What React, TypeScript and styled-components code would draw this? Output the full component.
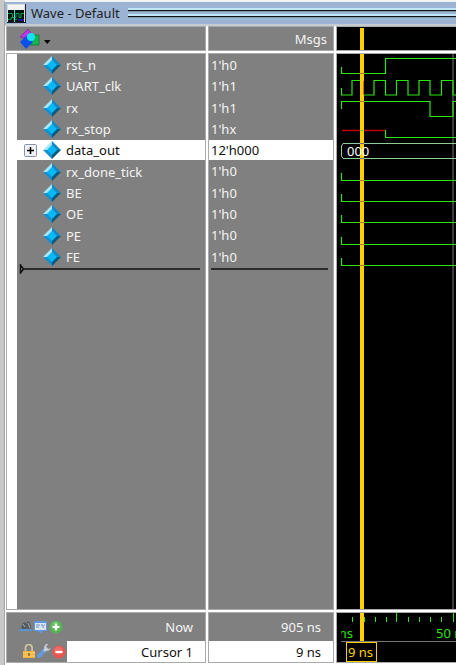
import React from "react";
import styled, { createGlobalStyle } from "styled-components";

const GREY = "#808080";
const GREEN = "#2be610";
const GOLD = "#ffd000";

const GlobalStyle = createGlobalStyle`
  * { box-sizing: border-box; }
  body { margin: 0; background: #c8c8c8; font: 13px/20px "Noto Sans", "Open Sans", sans-serif; }
  button { font: inherit; color: inherit; padding: 0; border: 0; background: none; }
`;

const Window = styled.main`
  min-height: 100vh;
  display: flex;
  flex-direction: column;
  margin-left: 4px;
  border-left: 1px solid #a4a4a4;
  border-top: 2px solid #f4f4f4;
  background: #fff;
  overflow: hidden;
`;

const TitleBar = styled.header`
  height: 22px;
  display: flex;
  align-items: center;
  gap: 5px;
  padding-left: 2px;
  background: #9bb4d3;
`;

const Title = styled.h1`
  margin: 0;
  font-size: 13px;
  font-weight: 400;
  line-height: 20px;
  color: #222;
  white-space: pre;
`;

const Grip = styled.div`
  flex: 1;
  height: 10px;
  margin-left: 3px;
  background: linear-gradient(#c2e4f4 0 2px, #111 2px 3px, #7e98ac 3px 4px, #9bb4d3 4px 6px, #c2e4f4 6px 8px, #111 8px 9px, #7e98ac 9px);
`;

const Panes = styled.div`
  flex: 1;
  display: grid;
  grid-template-columns: 198px 124px minmax(0, 1fr);
  grid-template-rows: 23px minmax(0, 1fr) 49px;
  gap: 4px;
  padding: 1px 0 3px 2px;
  border-top: 2px solid #c6cbd0;
  background: #fff;
`;

const Pane = styled.section<{ $dark?: boolean }>`
  min-width: 0;
  background: ${(p) => (p.$dark ? "#000" : GREY)};
  color: #f4f4f4;
  box-shadow: 0 0 0 1px #aaa;
  overflow: hidden;
`;

const HeaderPane = styled(Pane)`
  display: flex;
  align-items: center;
`;

const ValueHeader = styled(HeaderPane)`
  justify-content: flex-end;
  padding-right: 6px;
`;

const MenuButton = styled.button`
  display: flex;
  margin-left: 12px;
`;

const NamesPane = styled(Pane)`
  border-left: 10px solid #fff;
  padding-top: 1px;
`;

const ValuesPane = styled(Pane)`
  padding-top: 1px;
`;

const SignalList = styled.ul`
  height: 212px;
  margin: 0;
  padding: 0;
  list-style: none;
  display: grid;
  grid-template-rows: repeat(10, 1fr);
  gap: 1px;
`;

const NameRow = styled.li<{ $selected: boolean }>`
  display: grid;
  grid-template-columns: 14px 18px 1fr;
  column-gap: 5px;
  align-items: center;
  padding-left: 7px;
  white-space: nowrap;
  background: ${(p) => (p.$selected ? "#fff" : "transparent")};
  color: ${(p) => (p.$selected ? "#111" : "#f4f4f4")};
`;

const ValueRow = styled.li<{ $selected: boolean }>`
  padding-left: 2px;
  background: ${(p) => (p.$selected ? "#fff" : "transparent")};
  color: ${(p) => (p.$selected ? "#111" : "#f4f4f4")};
`;

const ExpandButton = styled.button`
  width: 14px;
  height: 14px;
  display: flex;
  margin-top: 2px;
`;

const InsertLine = styled.svg`
  display: block;
  width: 100%;
  height: 10px;
  margin-top: -3px;
`;

const Drawing = styled.svg`
  display: block;
  width: 100%;
  height: 100%;
`;

const FooterNames = styled(Pane)`
  display: grid;
  grid-template-rows: 28px 21px;
`;

const FooterRow = styled.div`
  display: flex;
  align-items: center;
`;

const Tools = styled.div`
  width: 60px;
  display: flex;
  padding-left: 11px;
`;

const CursorTools = styled(Tools)`
  padding-left: 14px;
`;

const ToolButton = styled.button`
  width: 15px;
  height: 16px;
  display: flex;
  align-items: center;
  justify-content: center;
`;

const FooterLabel = styled.div<{ $active?: boolean }>`
  flex: 1;
  align-self: stretch;
  display: flex;
  align-items: center;
  justify-content: flex-end;
  padding-right: 12px;
  background: ${(p) => (p.$active ? "#fff" : "transparent")};
  color: ${(p) => (p.$active ? "#111" : "#f4f4f4")};
`;

const signals = [
  { name: "rst_n", value: "1'h0" },
  { name: "UART_clk", value: "1'h1" },
  { name: "rx", value: "1'h1" },
  { name: "rx_stop", value: "1'hx" },
  { name: "data_out", value: "12'h000", bus: true },
  { name: "rx_done_tick", value: "1'h0" },
  { name: "BE", value: "1'h0" },
  { name: "OE", value: "1'h0" },
  { name: "PE", value: "1'h0" },
  { name: "FE", value: "1'h0" },
];

const WaveIcon = () => (
  <svg width="19" height="19" viewBox="0 0 19 19">
    <path d="M0 0h19v19H0z" fill="#222" />
    <path d="M0 0h18v18H0z" fill="#ddd" />
    <path d="M1 1h16v5H1z" fill="#f4f4f4" />
    <path d="M1 6h16v12H1z" fill="#051510" />
    <path d="M1 9.500h4.500v4H9v-4h3v4h2v-4h3M1 15.500h3v-2h3v2h3" fill="none" stroke="#0b9a4b" />
    <path d="M7.500 6v12" stroke="#48d8e4" />
    <path d="M11 15h6v2h-6z" fill="#2214a0" />
  </svg>
);

const ShapesIcon = () => (
  <svg width="34" height="21" viewBox="0 0 34 21">
    <path d="M1 9L9 1l4 6-5 4z" fill="#c232e6" stroke="#6e2388" strokeWidth=".7" />
    <path d="M13 7h7v10h-9z" fill="#14b552" stroke="#0d6d34" strokeWidth=".7" />
    <path d="M1 14l6-6 7 6-7 7z" fill="#0b50e8" />
    <circle cx="12" cy="9" r="4" fill="#13e3f5" />
    <path d="M25 12h6.500l-3.200 4z" fill="#000" />
  </svg>
);

const Diamond = () => (
  <svg width="18" height="18" viewBox="0 0 18 18">
    <path d="M9 0L0 9h9z" fill="#a9e4f7" />
    <path d="M9 0l9 9H9z" fill="#1487c5" />
    <path d="M0 9l9 9V9z" fill="#168fd0" />
    <path d="M18 9l-9 9V9z" fill="#07597e" />
    <path d="M9 4l5 5-5 5-5-5z" fill="#06b9f4" />
  </svg>
);

const PlusBox = () => (
  <svg width="14" height="14" viewBox="0 0 14 14">
    <rect x=".5" y=".5" width="12" height="12" rx="1" fill="#f0f1f6" stroke="#8792a8" />
    <path d="M3 6.500h7M6.500 3v7" stroke="#000" strokeWidth="1.500" />
  </svg>
);

const FindIcon = () => (
  <svg width="14" height="14" viewBox="0 0 14 14">
    <path d="M1 10l3-7 2-1 1 2 2-3 2 2 2 7-3 1-2-3-2 3z" fill="#555b60" />
    <path d="M4 4l2 3M9 3l2 5" stroke="#aaa" />
    <path d="M0 10l3-2v1h8V8l3 2-3 2v-1H3v1z" fill="#5b94cc" />
  </svg>
);

const PanelIcon = () => (
  <svg width="15" height="14" viewBox="0 0 15 14">
    <path d="M1 1h13v10h-4l-2 3-3-3H1z" fill="#6297df" />
    <path d="M2 3h11v7H2z" fill="#dae5f4" />
    <path d="M3 5h4M3 7h3M8 5h2v3M11 5h1" stroke="#6f8fba" fill="none" />
  </svg>
);

const RoundIcon = ({ add }: { add?: boolean }) => (
  <svg width="14" height="14" viewBox="0 0 14 14">
    <circle cx="7" cy="7" r="6.500" fill={add ? "#55b551" : "#e8554f"} />
    <circle cx="6.500" cy="5.500" r="4" fill="#fff" opacity=".15" />
    <path d={add ? "M3.500 7h7M7 3.500v7" : "M3.500 7h7"} stroke="#fff" strokeWidth="2.200" />
  </svg>
);

const LockIcon = () => (
  <svg width="14" height="15" viewBox="0 0 14 15">
    <path d="M3.500 7V4a3.300 3.300 0 0 1 6.600-.5V7" fill="none" stroke="#d5c6a2" strokeWidth="1.700" />
    <path d="M1 7h12v7H1z" fill="#f0b23e" />
    <path d="M1 9h12M1 12h12" stroke="#f9d477" />
    <path d="M7 9v3" stroke="#83622c" strokeWidth="1.500" />
  </svg>
);

const WrenchIcon = () => (
  <svg width="15" height="15" viewBox="0 0 15 15">
    <path d="M3 12l6-6" stroke="#6698dc" strokeWidth="4" strokeLinecap="round" />
    <path d="M8 7l3-3" stroke="#c9d0d8" strokeWidth="2.500" />
    <path d="M10 0L8 3l1 3 3 1 3-3-3 1-2-2 2-3z" fill="#c9d0d8" />
  </svg>
);

const idleSignals = [126, 147, 168, 190, 211];

const Waveforms = () => (
  <Drawing role="img" aria-label="Signal waveforms">
    <path d="M116 0V3000" stroke="#777" strokeWidth="1" />
    <g fill="none" stroke={GREEN} strokeWidth="1.200">
      <path d="M4.500 13v6.500H48.500V4.500H3000" />
      <path d="M4.500 34v7H15V26.500H25.500V41H37V26.500H48.500V41H59.500V26.500H71V41H82V26.500H93V41H104.500V26.500H116V41H127V26.500H138V41H3000" />
      <path d="M4.500 55v-7.500H93V62.500H116V47.500H3000" />
      <path d="M48.500 76v7.500H3000" />
      {idleSignals.map((y) => (
        <path key={y} d={`M4.500 ${y - 7}V${y}.500H3000`} />
      ))}
    </g>
    <path d="M5 76.500H48" stroke="#c00000" strokeWidth="1.500" />
    <path d="M3000 89.500H6L4.500 92v10L6 104.500H3000" fill="none" stroke="#8fd092" />
    <path d="M23 0h4v3000h-4z" fill={GOLD} />
    <path d="M23 19.500h4M23 47.500h4M23 126.500h4M23 147.500h4M23 168.500h4M23 190.500h4M23 211.500h4" stroke="#e0672a" />
    <path d="M23 76.500h4" stroke="#6fd020" />
    <path d="M26.500 27v14" stroke="#e0672a" />
    <path d="M23 89.500h4M23 104.500h4" stroke="#80628c" />
    <text x="10" y="102" fill="#fff" fontSize="13">000</text>
  </Drawing>
);

const minorTicks = [15, 27, 38, 49, 71, 82, 93, 104];

const Timeline = () => (
  <Drawing role="img" aria-label="Time axis with cursor at 9 ns">
    <g stroke={GREEN}>
      {minorTicks.map((x) => (
        <path key={x} d={`M${x}.500 4v5`} />
      ))}
      <path d="M59.500 0v9M116.500 0v9" />
    </g>
    <svg x="4" y="0" width="3000" height="27">
      <g fill={GREEN} fontSize="13">
        <text x="-13" y="25">0 ns</text>
        <text x="95" y="25">50 ns</text>
      </g>
    </svg>
    <path d="M4 28.500H3000" stroke="#777" />
    <path d="M23 0h4v28h-4z" fill={GOLD} />
    <rect x="9.500" y="29.500" width="30" height="19" fill="#000" stroke={GOLD} />
    <text x="11" y="44" fill={GOLD} fontSize="13">9 ns</text>
  </Drawing>
);

export default function App() {
  return (
    <>
      <GlobalStyle />
      <Window>
        <TitleBar>
          <WaveIcon />
          <Title>Wave - Default</Title>
          <Grip />
        </TitleBar>
        <Panes>
          <HeaderPane>
            <MenuButton aria-label="Signal options"><ShapesIcon /></MenuButton>
          </HeaderPane>
          <ValueHeader>Msgs</ValueHeader>
          <Pane $dark>
            <Drawing aria-hidden="true"><path d="M23 1h4v22h-4z" fill={GOLD} /></Drawing>
          </Pane>

          <NamesPane>
            <SignalList>
              {signals.map((s) => (
                <NameRow key={s.name} $selected={!!s.bus}>
                  {s.bus ? <ExpandButton aria-label="Expand data_out"><PlusBox /></ExpandButton> : <span />}
                  <Diamond />
                  <span>{s.name}</span>
                </NameRow>
              ))}
            </SignalList>
            <InsertLine aria-hidden="true">
              <path d="M3.500 1v8l3-4zM6 5H183" fill="none" stroke="#111" strokeWidth="1.500" />
            </InsertLine>
          </NamesPane>
          <ValuesPane>
            <SignalList>
              {signals.map((s) => (
                <ValueRow key={s.name} $selected={!!s.bus}>{s.value}</ValueRow>
              ))}
            </SignalList>
            <InsertLine aria-hidden="true">
              <path d="M2 5H119" stroke="#111" strokeWidth="1.500" />
            </InsertLine>
          </ValuesPane>
          <Pane $dark><Waveforms /></Pane>

          <FooterNames>
            <FooterRow>
              <Tools>
                <ToolButton aria-label="Find"><FindIcon /></ToolButton>
                <ToolButton aria-label="Panel settings"><PanelIcon /></ToolButton>
                <ToolButton aria-label="Add cursor"><RoundIcon add /></ToolButton>
              </Tools>
              <FooterLabel>Now</FooterLabel>
            </FooterRow>
            <FooterRow>
              <CursorTools>
                <ToolButton aria-label="Lock cursor"><LockIcon /></ToolButton>
                <ToolButton aria-label="Edit cursor"><WrenchIcon /></ToolButton>
                <ToolButton aria-label="Remove cursor"><RoundIcon /></ToolButton>
              </CursorTools>
              <FooterLabel $active>Cursor 1</FooterLabel>
            </FooterRow>
          </FooterNames>
          <FooterNames>
            <FooterRow><FooterLabel>905 ns</FooterLabel></FooterRow>
            <FooterRow><FooterLabel $active>9 ns</FooterLabel></FooterRow>
          </FooterNames>
          <Pane $dark><Timeline /></Pane>
        </Panes>
      </Window>
    </>
  );
}
